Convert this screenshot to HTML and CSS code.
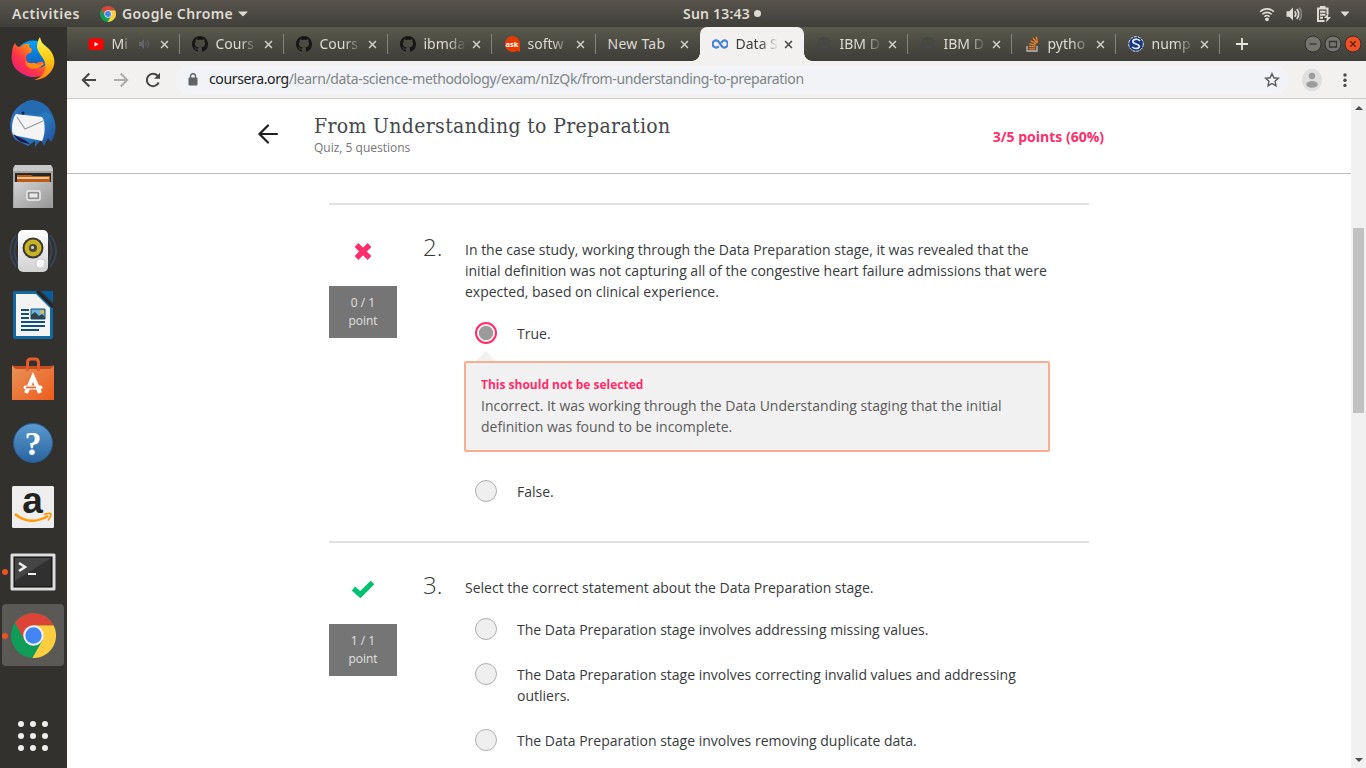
FILE: index.html
```html
<!DOCTYPE html>
<html lang="en">
<head>
<meta charset="utf-8">
<title>From Understanding to Preparation</title>
<link rel="stylesheet" href="styles.css">
</head>
<body>
<svg class="defs" width="0" height="0">
  <defs>
    <symbol id="x" viewBox="0 0 10 10"><path d="M1.2 1.2l7.6 7.6M8.8 1.2l-7.6 7.6" fill="none" stroke="currentColor" stroke-width="1.7"/></symbol>
    <symbol id="github" viewBox="0 0 16 16"><path fill="#171615" d="M8 0C3.58 0 0 3.58 0 8c0 3.54 2.29 6.53 5.47 7.59.4.07.55-.17.55-.38 0-.19-.01-.82-.01-1.49-2.01.37-2.53-.49-2.69-.94-.09-.23-.48-.94-.82-1.13-.28-.15-.68-.52-.01-.53.63-.01 1.08.58 1.23.82.72 1.21 1.87.87 2.33.66.07-.52.28-.87.51-1.07-1.78-.2-3.64-.89-3.64-3.95 0-.87.31-1.59.82-2.15-.08-.2-.36-1.02.08-2.12 0 0 .67-.21 2.2.82.64-.18 1.32-.27 2-.27s1.36.09 2 .27c1.53-1.04 2.2-.82 2.2-.82.44 1.1.16 1.92.08 2.12.51.56.82 1.27.82 2.15 0 3.07-1.87 3.75-3.65 3.95.29.25.54.73.54 1.48 0 1.07-.01 1.93-.01 2.2 0 .21.15.46.55.38A8.01 8.01 0 0 0 16 8c0-4.42-3.58-8-8-8z"/></symbol>
    <symbol id="chrome" viewBox="0 0 44 44">
      <circle cx="22" cy="22" r="22" fill="#0f9d58"/>
      <path d="M22 12H41.6A22 22 0 0 1 21 44L30.7 27Z" fill="#ffcd40"/>
      <path d="M22 22L13.3 27 4 9.500A22 22 0 0 1 41.600 12H22Z" fill="#db4437"/>
      <circle cx="22" cy="22" r="10" fill="#f1f1f1"/><circle cx="22" cy="22" r="8" fill="#4285f4"/>
    </symbol>
    <symbol id="ibm" viewBox="0 0 16 16"><circle cx="8" cy="8" r="7" fill="#474744"/><path d="M4 8a5 5 0 0 1 8-3M6 9a3 3 0 0 0 5 2" stroke="#4c4c49" fill="none"/></symbol>
    <linearGradient id="ff" x1="0" y1="1" x2="1" y2="0"><stop offset="0" stop-color="#e31587"/><stop offset=".4" stop-color="#ff3647"/><stop offset=".7" stop-color="#ff9a0a"/><stop offset="1" stop-color="#fff44f"/></linearGradient>
    <linearGradient id="tail" x1="0" y1="0" x2="0" y2="1"><stop offset="0" stop-color="#fff44f"/><stop offset=".5" stop-color="#ffcb13"/><stop offset="1" stop-color="#ff7b16"/></linearGradient>
    <linearGradient id="ffb" x1="0" y1="0" x2="0" y2="1"><stop offset="0" stop-color="#00a3ff"/><stop offset="1" stop-color="#203a9c"/></linearGradient>
    <linearGradient id="tb" x1="0" y1="0" x2="1" y2="1"><stop offset="0" stop-color="#2e6ec0"/><stop offset=".6" stop-color="#2a78bd"/><stop offset="1" stop-color="#1c489b"/></linearGradient>
    <linearGradient id="metal" x1="0" y1="0" x2="1" y2="1"><stop offset="0" stop-color="#d2d2d2"/><stop offset="1" stop-color="#969696"/></linearGradient>
    <linearGradient id="white" x1="0" y1="0" x2="0" y2="1"><stop offset="0" stop-color="#fff"/><stop offset="1" stop-color="#d0d0d0"/></linearGradient>
    <linearGradient id="bag" x1="0" y1="0" x2="1" y2="1"><stop offset="0" stop-color="#e69257"/><stop offset="1" stop-color="#ef5c1d"/></linearGradient>
    <linearGradient id="help" x1="0" y1="0" x2="0" y2="1"><stop offset="0" stop-color="#5a9bd0"/><stop offset="1" stop-color="#2a639e"/></linearGradient>
  </defs>
</svg>

<header class="panel">
  <span class="activities">Activities</span>
  <svg class="app-icon" width="16" height="16"><use href="#chrome"/></svg>
  <span class="app-name">Google Chrome</span>
  <svg width="10" height="6" viewBox="0 0 10 6"><path d="M0 .5h10L5 5.500z" fill="#dfdbd2"/></svg>
  <span class="clock">Sun 13:43</span><i class="clock-dot"></i>
  <div class="tray">
    <svg width="16" height="16" viewBox="0 0 16 16" fill="none" stroke="#dfdbd2" stroke-width="1.600"><path d="M1.200 5.700a9.500 9.500 0 0 1 13.600 0M3.300 8.300a6.600 6.600 0 0 1 9.400 0M5.400 10.700a3.700 3.700 0 0 1 5.200 0"/><circle cx="8" cy="13.300" r="1.900" fill="#dfdbd2" stroke="none"/></svg>
    <svg width="16" height="16" viewBox="0 0 16 16" fill="none" stroke="#dfdbd2" stroke-width="1.700"><path d="M.5 5.200h2.800L7 1.600v12.800L3.300 10.800H.5z" fill="#dfdbd2" stroke="none"/><path d="M8.600 5.200a4.200 4.200 0 0 1 0 5.600M10.800 3.200a7 7 0 0 1 0 9.600"/><path d="M13.200 1.700a9.500 9.500 0 0 1 0 12.600" stroke="#89867e"/></svg>
    <svg class="battery" width="16" height="18" viewBox="0 0 16 18" fill="none" stroke="#dfdbd2" stroke-width="2"><path d="M9.500 16H3V3.500h9.500V9M5 2h5.500M5 6.700h5.500M5 9.700h5.500M5 12.700h3"/><path d="M13.500 8L9 13h2.800l-.8 4.500 5-5.500h-3z" fill="#dfdbd2" stroke="none"/></svg>
    <svg width="10" height="6" viewBox="0 0 10 6"><path d="M.5.500h9L5 5.500z" fill="#dfdbd2"/></svg>
  </div>
</header>

<div class="desktop">
  <nav class="dock">
    <div class="app"><svg width="46" height="46" viewBox="0 0 46 46">
      <circle cx="23" cy="23" r="18.500" fill="url(#ffb)"/>
      <path d="M5 7c1 3 3 4 5 4 3-3 7-4 10-3-2 2-1 3 2 5l-1 4c-3 0-5 2-5 5 1 4 4 6 8 6 4-1 6-3 9-2 1 2-2 5-7 6 8 1 13-5 13-13 3 3 3 10 0 15-5 7-16 9-24 5C5 35 0 27 2 17c0-4 1-7 3-10z" fill="url(#ff)"/>
      <path d="M30 1c1 6 4 8 9 12 5 5 7 13 4 19-3 7-10 12-19 12 10-4 13-10 11-17-1-6-7-9-8-16 0-4 1-7 3-10z" fill="url(#tail)"/>
      <path d="M15 25c3 3 6 2 10 2 2 2 4 2 10 0-4 5-12 8-17 4-2-2-3-4-3-6z" fill="#ff8c13"/></svg></div>
    <div class="app"><svg width="48" height="48" viewBox="0 0 48 48">
      <path d="M13 5c9-6 23-2 29 9 6 9 6 20 0 29l-3-4-4 8-3-6-6 7V42l-7 5-12-6C-1 34-2 14 13 5z" fill="url(#tb)"/>
      <path d="M7 15l26 3c4 5 3 19 0 24L4 36C2 30 3 20 7 15z" fill="#f4f4f4"/><path d="M8 18l8 12 18-8" fill="none" stroke="#9b9ca2" stroke-width="1.200"/>
      <path d="M9 15C12 5 17 1 23 1c12 1 20 9 22 20-4-8-9-10-13-6l-5 1c-6-3-11 0-18-1z" fill="#246bb1"/><circle cx="14" cy="14" r="1.500" fill="#092045"/><path d="M4 34c3 5 10 4 17 11-9-1-14-4-17-11z" fill="#24174c"/></svg></div>
    <div class="app"><svg width="44" height="46" viewBox="0 0 44 46">
      <path d="M4 1h36l2 3v40H2V4z" fill="#a4a4a4"/><path d="M4 1h36l2 6H2z" fill="#c9c9c9"/><path d="M4 9h36v10H4z" fill="#292724"/><path d="M6 11h14l2 1h17v6H6z" fill="#bd5b16"/><path d="M6 14h32" stroke="#f4e7c9" stroke-width="1.500"/><path d="M3 18h38v26H3z" fill="url(#metal)"/><rect x="16" y="27" width="13" height="9" rx="1.500" fill="#8e8e8e" stroke="#eee" stroke-width="1.500"/><rect x="18.500" y="29.500" width="8" height="4" fill="#e8e8e8"/></svg></div>
    <div class="app"><svg width="48" height="46" viewBox="0 0 48 46">
      <path d="M7 7C-1 17 0 29 7 39M10 8C4 18 4 28 10 38M41 7c8 10 8 22 0 32M38 8c6 10 6 20 0 30" stroke="#384556" stroke-width="2" fill="none"/><rect x="9" y="2" width="30" height="42" rx="5" fill="url(#white)"/><circle cx="24" cy="20" r="10.500" fill="#383838"/><circle cx="24" cy="20" r="8.500" fill="#c9b221"/><circle cx="24" cy="20" r="4" fill="#4a4841"/><circle cx="23.500" cy="19.500" r="1.500" fill="#ddd"/><rect x="27" y="31" width="9" height="9" rx="3.500" fill="#f8f8f8" stroke="#c6c6c6"/></svg></div>
    <div class="app"><svg width="40" height="48" viewBox="0 0 40 48">
      <path d="M0 2q0-2 2-2h22l16 16v30q0 2-2 2H2q-2 0-2-2z" fill="#1268a2"/><path d="M3 3h20l14 14v28H3z" fill="#f3f3f3"/><path d="M28 0h12v12z" fill="#075e9d"/><path d="M24 0l16 16" stroke="#242424" stroke-width="2.500"/><path d="M8 19h8M8 23h8M8 27h8M8 31h24M8 35h24M8 39h18" stroke="#14506f" stroke-width="2"/><path d="M18 18h14v10H18z" fill="#69b7de"/><circle cx="29" cy="21" r="2" fill="#e5bd4c"/><path d="M18 28v-4l4-3 4 4 3-2 3 3v2z" fill="#35424c"/><path d="M18 18h14v10H18z" fill="none" stroke="#14506f"/></svg></div>
    <div class="app"><svg width="42" height="46" viewBox="0 0 42 46">
      <path d="M0 9l3 1h36l3-1v9H0z" fill="#c64c21"/><path d="M0 10l4 3h34l4-3v34H0z" fill="url(#bag)"/><path d="M15.500 15V7q0-4 3-4h5q3 0 3 4v8" fill="none" stroke="#e65a2b" stroke-width="3"/><path d="M14 37l7-16 7 16" fill="none" stroke="#fff" stroke-width="4"/><path d="M13.500 31.500h15" stroke="#fff" stroke-width="4" stroke-linecap="round"/><path d="M14 31.500h10" stroke="#ec6930" stroke-width="1.800"/></svg></div>
    <div class="app"><svg width="42" height="42" viewBox="0 0 42 42"><circle cx="21" cy="21" r="19.500" fill="url(#help)" stroke="#265b91"/><text x="21" y="33" text-anchor="middle" class="question-mark">?</text></svg></div>
    <div class="app"><svg width="44" height="44" viewBox="0 0 44 44"><rect x="1" y="1" width="42" height="42" rx="1.500" fill="#eee"/><text x="21.500" y="27.500" text-anchor="middle" class="amazon-a">a</text><path d="M4 29c10 8.500 22 8.500 33 2" fill="none" stroke="#ff9900" stroke-width="2.600"/><path d="M33 29.500q6-2 7-.5-.5 4-3 6.500" fill="none" stroke="#ff9900" stroke-width="1.700"/></svg></div>
    <div class="app"><i class="running"></i><svg width="46" height="40" viewBox="0 0 46 40"><rect x=".5" y="2.500" width="45" height="37" rx="1.500" fill="#ddd"/><rect x="4" y="6" width="38" height="30" fill="#303030" stroke="#090909"/><path d="M5 7h36L5 30z" fill="#454545"/><path d="M9 12l6 4-6 4" fill="none" stroke="#eee" stroke-width="2.600"/><path d="M18 23h8" stroke="#eee" stroke-width="2"/></svg></div>
    <div class="app"><span class="app-active"></span><i class="running"></i><svg class="big-chrome" width="45" height="45"><use href="#chrome"/></svg></div>
    <svg class="apps-grid" width="32" height="32" viewBox="0 0 32 32" fill="#eee"><circle cx="4" cy="4" r="3"/><circle cx="16" cy="4" r="3"/><circle cx="28" cy="4" r="3"/><circle cx="4" cy="16" r="3"/><circle cx="16" cy="16" r="3"/><circle cx="28" cy="16" r="3"/><circle cx="4" cy="28" r="3"/><circle cx="16" cy="28" r="3"/><circle cx="28" cy="28" r="3"/></svg>
  </nav>

  <div class="browser">
    <div class="tabs">
      <div class="tab"><svg class="favicon" viewBox="0 0 16 16"><rect x=".5" y="2.500" width="15" height="11.500" rx="2.500" fill="#f00"/><path d="M6.500 6v4.500l4-2.250z" fill="#fff"/></svg><span class="label short">Mi</span><svg class="sound" width="11" height="10" viewBox="0 0 11 10"><path d="M0 3h2l3-3v10L2 7H0z" fill="#62646a"/><path d="M6.500 3q1.500 2 0 4M8.500 1q2.500 4 0 8" fill="none" stroke="#62646a"/></svg><svg class="close"><use href="#x"/></svg></div>
      <div class="tab"><svg class="favicon"><use href="#github"/></svg><span class="label">Cours</span><svg class="close"><use href="#x"/></svg></div>
      <div class="tab"><svg class="favicon"><use href="#github"/></svg><span class="label">Cours</span><svg class="close"><use href="#x"/></svg></div>
      <div class="tab"><svg class="favicon"><use href="#github"/></svg><span class="label">ibmda</span><svg class="close"><use href="#x"/></svg></div>
      <div class="tab"><svg class="favicon" viewBox="0 0 16 16"><path d="M8 0a8 8 0 0 1 8 8v8l-3-1.200A8 8 0 1 1 8 0z" fill="#e83a03"/><text x="8" y="10.500" text-anchor="middle" class="ask">ask</text></svg><span class="label">softw</span><svg class="close"><use href="#x"/></svg></div>
      <div class="tab last"><span class="label plain">New Tab</span><svg class="close"><use href="#x"/></svg></div>
      <div class="tab active"><svg class="favicon" viewBox="0 0 16 16"><path d="M6.800 10.200C5.700 11.400 5.100 11.600 4.200 11.600a3.600 3.600 0 0 1 0-7.200c4 0 4.300 7.200 8 7.200a3.600 3.600 0 0 0 0-7.200C10.500 4.400 9.800 6 9.200 7" fill="none" stroke="#4683d8" stroke-width="2.200"/></svg><span class="label">Data S</span><svg class="close"><use href="#x"/></svg></div>
      <div class="tab"><svg class="favicon"><use href="#ibm"/></svg><span class="label">IBM D</span><svg class="close"><use href="#x"/></svg></div>
      <div class="tab"><svg class="favicon"><use href="#ibm"/></svg><span class="label">IBM D</span><svg class="close"><use href="#x"/></svg></div>
      <div class="tab"><svg class="favicon" viewBox="0 0 16 16"><path d="M3 10v5h10v-5" fill="none" stroke="#bcbbb5" stroke-width="1.300"/><path d="M4.800 12.800h6.500M4.800 10.400l6.500.5M5.300 7.700l6.200 1.700M6.600 4.700l5.500 3.200M9 2l4 5M12.300.6l1.200 6" stroke="#f48024" stroke-width="1.300"/></svg><span class="label">pytho</span><svg class="close"><use href="#x"/></svg></div>
      <div class="tab"><svg class="favicon" viewBox="0 0 16 16"><circle cx="8" cy="8" r="7.300" fill="#183981" stroke="#dce4f0" stroke-width="1" stroke-dasharray="3 1"/><path d="M12 4.800C9 2 4.500 3.500 5 6c.4 2.400 6 1.600 6.300 4 .4 2.500-4.300 3.600-7 1" fill="none" stroke="#eee" stroke-width="1.700"/></svg><span class="label">nump</span><svg class="close"><use href="#x"/></svg></div>
      <svg class="new-tab" width="12" height="12" viewBox="0 0 12 12"><path d="M6 0v12M0 6h12" stroke="#e8e6e0" stroke-width="1.800"/></svg>
      <div class="win-buttons">
        <svg viewBox="0 0 18 18"><circle cx="9" cy="9" r="8" fill="#76756f" stroke="#32312d"/><path d="M5.500 9h7" stroke="#363531" stroke-width="1.300"/></svg>
        <svg viewBox="0 0 18 18"><circle cx="9" cy="9" r="8" fill="#76756f" stroke="#32312d"/><path d="M5.500 6.500h7v5.500h-7z" fill="none" stroke="#363531" stroke-width="1.300"/></svg>
        <svg viewBox="0 0 18 18"><circle cx="9" cy="9" r="8" fill="#f15024" stroke="#32312d"/><path d="M6.300 6.300l5.400 5.400M11.700 6.300l-5.400 5.400" stroke="#5c2412" stroke-width="1.300"/></svg>
      </div>
    </div>

    <div class="toolbar">
      <svg class="nav-icon" viewBox="0 0 16 16"><path d="M15 8H2M8.300 1.500L1.800 8l6.500 6.500" stroke="#464646"/></svg>
      <svg class="nav-icon" viewBox="0 0 16 16"><path d="M1 8h13M7.700 1.500L14.200 8l-6.500 6.500" stroke="#ababab"/></svg>
      <svg class="nav-icon reload" viewBox="0 0 16 16"><path d="M13.700 10.500A6.200 6.200 0 1 1 12.600 3.800" stroke="#464646"/><path d="M15 .8v6H9z" fill="#464646" stroke="none"/></svg>
      <div class="omnibox">
        <svg width="10" height="13" viewBox="0 0 10 13"><rect x=".5" y="4.500" width="9" height="8" rx="1" fill="#5f6368"/><path d="M2.500 5V3.300a2.500 2.500 0 0 1 5 0V5" fill="none" stroke="#5f6368" stroke-width="1.400"/></svg>
        <span class="url"><b>coursera.org</b>/learn/data-science-methodology/exam/nIzQk/from-understanding-to-preparation</span>
        <svg class="star" width="16" height="16" viewBox="0 0 16 16"><path d="M8 1.700l1.900 4.100 4.500.5-3.400 3 1 4.500L8 11.500l-4 2.300 1-4.500-3.400-3 4.500-.5z" fill="none" stroke="#55585d" stroke-width="1.400"/></svg>
      </div>
      <svg class="avatar" width="20" height="22" viewBox="0 0 20 22"><ellipse cx="10" cy="11" rx="10" ry="11" fill="#dedede"/><circle cx="10" cy="7" r="3.200" fill="#9c9c9c"/><ellipse cx="10" cy="15.300" rx="5.700" ry="3.400" fill="#9c9c9c"/></svg>
      <svg class="menu" width="4" height="16" viewBox="0 0 4 16" fill="#484848"><circle cx="2" cy="3" r="1.700"/><circle cx="2" cy="8.200" r="1.700"/><circle cx="2" cy="13.400" r="1.700"/></svg>
    </div>

    <div class="viewport">
      <main class="page">
        <header class="quiz-header">
          <svg class="back" width="22" height="20" viewBox="0 0 22 20"><path d="M20 10H3M11 1.500L2.500 10l8.500 8.500" fill="none" stroke="#1f1f1f" stroke-width="2.200" stroke-linecap="round"/></svg>
          <div><h1>From Understanding to Preparation</h1><p>Quiz, 5 questions</p></div>
          <strong>3/5 points (60%)</strong>
        </header>
        <section class="question">
          <aside class="result"><svg width="20" height="20" viewBox="0 0 20 20"><path d="M3.500 4l13 13M16.500 4l-13 13" stroke="#ff2d6c" stroke-width="5.400" stroke-linecap="butt"/></svg><div class="points">0 / 1<br>point</div></aside>
          <span class="number">2.</span>
          <div class="body">
            <p>In the case study, working through the Data Preparation stage, it was revealed that the<br>initial definition was not capturing all of the congestive heart failure admissions that were<br>expected, based on clinical experience.</p>
            <div class="option"><i class="radio wrong"></i><span>True.</span></div>
            <div class="feedback"><strong>This should not be selected</strong>Incorrect. It was working through the Data Understanding staging that the initial<br>definition was found to be incomplete.</div>
            <div class="option after-feedback"><i class="radio"></i><span>False.</span></div>
          </div>
        </section>
        <section class="question second">
          <aside class="result"><svg width="24" height="20" viewBox="0 0 24 20"><path d="M2.500 9.500l6.800 6.200L21.500 3.500" fill="none" stroke="#00c16e" stroke-width="5.200"/></svg><div class="points">1 / 1<br>point</div></aside>
          <span class="number">3.</span>
          <div class="body">
            <p>Select the correct statement about the Data Preparation stage.</p>
            <div class="option"><i class="radio"></i><span>The Data Preparation stage involves addressing missing values.</span></div>
            <div class="option"><i class="radio"></i><span>The Data Preparation stage involves correcting invalid values and addressing<br>outliers.</span></div>
            <div class="option"><i class="radio"></i><span>The Data Preparation stage involves removing duplicate data.</span></div>
          </div>
        </section>
      </main>
      <div class="scrollbar">
        <svg width="8" height="4" viewBox="0 0 8 4"><path d="M0 4l4-4 4 4z" fill="#4d4d4d"/></svg>
        <div class="thumb"></div>
        <svg class="down" width="8" height="4" viewBox="0 0 8 4"><path d="M0 0l4 4 4-4z" fill="#4d4d4d"/></svg>
      </div>
    </div>
  </div>
</div>
</body>
</html>
```
FILE: styles.css
```css
* { box-sizing: border-box; }
body { margin: 0; width: 1366px; height: 768px; overflow: hidden; display: flex; flex-direction: column; font: 14px/21px "Open Sans", sans-serif; color: #373a3c; background: #fff; }
svg { display: block; flex: none; }
.defs { position: absolute; }
h1, p { margin: 0; }

.panel { height: 27px; flex: none; display: flex; align-items: center; padding: 0 16px 0 12px; background: linear-gradient(#58544c, #403f3a); color: #dfdbd2; font: 600 14px/27px "Noto Sans", sans-serif; white-space: nowrap; }
.activities { width: 68px; letter-spacing: .55px; }
.app-icon { margin: 0 6px 0 20px; }
.app-name { width: 112px; margin-right: 4px; letter-spacing: .4px; }
.clock { width: 67px; margin-left: 435px; letter-spacing: .2px; }
.clock-dot { width: 7px; height: 7px; border-radius: 50%; background: #dfdbd2; margin-left: 4px; }
.tray { margin-left: auto; display: flex; align-items: center; gap: 11px; }
.battery { margin-left: 2px; margin-right: -2px; }

.desktop { flex: 1; min-height: 0; display: flex; }
.dock { width: 67px; flex: none; background: #33312d; display: flex; flex-direction: column; align-items: center; padding-right: 1px; }
.app { position: relative; width: 66px; height: 64px; flex: none; display: flex; align-items: center; justify-content: center; }
.running { position: absolute; left: 2px; top: 30px; width: 6px; height: 6px; border-radius: 50%; background: #e95420; }
.app-active { position: absolute; left: 2px; top: 1px; width: 62px; height: 62px; border-radius: 4px; background: #5b5956; }
.big-chrome { position: relative; }
.apps-grid { margin-top: 53px; }
.question-mark { font: 700 34px "Liberation Serif", serif; fill: #fff; }
.amazon-a { font: 700 37px "Liberation Sans", sans-serif; fill: #222; }

.browser { flex: 1; min-width: 0; display: flex; flex-direction: column; }
.tabs { height: 34px; flex: none; display: flex; align-items: center; padding-left: 8.500px; background: linear-gradient(#5a594c, #3d3c38); color: #dedbd2; font: 14px/34px "Noto Sans", sans-serif; }
.tab { position: relative; width: 104px; height: 34px; flex: none; display: flex; align-items: center; padding: 0 11px 0 12px; }
.tab::after { content: ""; position: absolute; right: 0; top: 7px; width: 1px; height: 20px; background: #85847b; }
.tab.last::after, .tab.active::after { display: none; }
.favicon { width: 16px; height: 16px; margin-right: 8px; }
.label { width: 44px; white-space: nowrap; -webkit-mask-image: linear-gradient(90deg, #000 55%, transparent 96%); mask-image: linear-gradient(90deg, #000 55%, transparent 96%); }
.label.short { width: 19px; }
.label.plain { width: 66px; letter-spacing: .25px; -webkit-mask-image: none; mask-image: none; }
.sound { margin-left: 8px; }
.close { width: 9px; height: 9px; margin-left: auto; color: #d2cfc6; }
.tab.active { background: #f2f1f0; color: #3c3b37; border-radius: 7px 7px 0 0; }
.tab.active::before { content: ""; position: absolute; left: -8px; right: -8px; bottom: 0; height: 8px; background: radial-gradient(circle at 0 0, transparent 7.500px, #f2f1f0 8px) left / 8px 8px no-repeat, radial-gradient(circle at 8px 0, transparent 7.500px, #f2f1f0 8px) right / 8px 8px no-repeat; }
.tab.active .close { color: #444; }
.new-tab { margin-left: 16.500px; }
.win-buttons { margin-left: auto; padding-right: 4px; display: flex; gap: 2px; }
.win-buttons svg { width: 18px; height: 18px; }
.ask { font: 700 7.500px "Open Sans", sans-serif; fill: #fff; }

.toolbar { height: 38px; flex: none; display: flex; align-items: center; padding-left: 14px; background: #f2f1f0; border-bottom: 1px solid #cdcccb; }
.nav-icon { width: 16px; height: 16px; margin-right: 16px; fill: none; stroke-width: 2; }
.nav-icon.reload { margin-right: 14px; }
.omnibox { width: 1114px; height: 28px; border-radius: 14px; background: #f1f3f6; display: flex; align-items: center; padding: 0 9px 0 13px; }
.url { margin-left: 11px; font: 14px/26px "Noto Sans", sans-serif; letter-spacing: -.365px; color: #808388; white-space: nowrap; padding-bottom: 2px; }
.url b { font-weight: 400; color: #202124; }
.star { margin-left: auto; }
.avatar { margin-left: 13px; }
.menu { margin-left: 21px; }

.viewport { flex: 1; min-height: 0; display: flex; }
.page { flex: 1; height: 669px; overflow: hidden; }
.quiz-header { height: 75px; display: flex; align-items: flex-start; padding: 0 247px 0 190px; border-bottom: 1px solid #bdbdbd; }
.back { margin: 25px 35px 0 0; }
h1 { margin-top: 14px; font: 400 21px/26px "DejaVu Serif Condensed", "DejaVu Serif", serif; font-stretch: condensed; letter-spacing: .33px; color: #44474a; white-space: nowrap; }
.quiz-header p { font-size: 12px; line-height: 18px; color: #757575; }
.quiz-header strong { margin: 27px 0 0 auto; color: #ff2d6c; font-weight: 700; }
.question { width: 760px; height: 338px; margin: 29px 0 0 262px; border-top: 2px solid #e1e1e1; display: flex; align-items: flex-start; padding-top: 34px; }
.question.second { margin-top: 0; }
.result { width: 68px; display: flex; flex-direction: column; align-items: center; padding-top: 2px; }
.points { margin-top: 25px; width: 68px; height: 52px; padding-top: 8px; background: #757575; color: #e1e1e1; font-size: 12px; line-height: 18px; text-align: center; }
.number { width: 42px; margin-left: 26px; font-size: 24px; font-weight: 300; line-height: 16px; }
.body { width: 585px; }
.option { display: flex; align-items: flex-start; padding-left: 10px; margin-top: 21px; }
.option + .option { margin-top: 24px; }
.option span { white-space: nowrap; }
.radio { width: 22px; height: 22px; margin: -1px 20px -1px 0; border: 1px solid #afafaf; border-radius: 50%; background: #efefef; flex: none; }
.radio.wrong { border: 2px solid #ff2d6c; background: radial-gradient(circle, #9b9b9b 6.700px, #f3f3f3 7.500px); }
.feedback { position: relative; width: 586px; height: 91px; margin: 17px 0 0 -1px; padding: 11px 15px; border: 2px solid #f9ad93; border-radius: 2px; background: #f1f1f1; color: #5a5a5a; white-space: nowrap; }
.feedback::before { content: ""; position: absolute; left: 10px; top: -12px; border: 10px solid transparent; border-top: 0; border-bottom-color: #f1f1f1; }
.feedback strong { display: block; color: #ff2d6c; font-size: 12px; font-weight: 700; }
.option.after-feedback { margin-top: 29px; }

.scrollbar { width: 15px; flex: none; display: flex; flex-direction: column; align-items: center; padding: 7px 0 6px; background: #f1f1f1; }
.thumb { width: 11px; height: 185px; margin-top: 118px; background: #c1c1c1; }
.scrollbar .down { margin-top: auto; }
```
